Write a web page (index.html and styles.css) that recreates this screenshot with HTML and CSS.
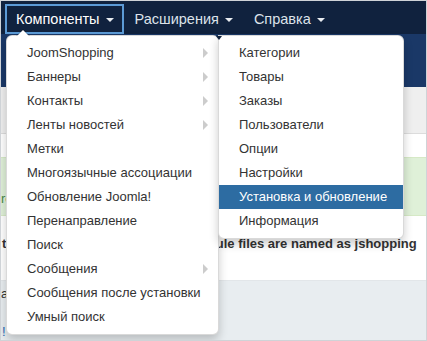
FILE: index.html
```html
<!doctype html>
<html lang="ru">
<head>
    <meta charset="UTF-8">
    <title>Компоненты</title>
    <link rel="stylesheet" href="styles.css">
</head>
<body>
<div class="frame">
    <div class="navbar">
        <div class="nav-item active">Компоненты <b class="caret"></b></div>
        <div class="nav-item">Расширения <b class="caret"></b></div>
        <div class="nav-item">Справка <b class="caret"></b></div>
    </div>
    <div class="header"></div>
    <div class="subhead"></div>
    <div class="content">
        <div class="alert">ro</div>
        <p class="note">that all of the template and all module files are named as jshopping</p>
    </div>
    <div class="footer">
        <p class="footer-line">a</p>
        <p class="footer-link">!</p>
    </div>

    <ul class="dropdown-menu">
        <li class="dropdown-submenu">
            <a>JoomShopping</a>
            <ul class="dropdown-menu submenu">
                <li><a>Категории</a></li>
                <li><a>Товары</a></li>
                <li><a>Заказы</a></li>
                <li><a>Пользователи</a></li>
                <li><a>Опции</a></li>
                <li><a>Настройки</a></li>
                <li class="hover"><a>Установка и обновление</a></li>
                <li><a>Информация</a></li>
            </ul>
        </li>
        <li class="dropdown-submenu"><a>Баннеры</a></li>
        <li class="dropdown-submenu"><a>Контакты</a></li>
        <li class="dropdown-submenu"><a>Ленты новостей</a></li>
        <li><a>Метки</a></li>
        <li><a>Многоязычные ассоциации</a></li>
        <li><a>Обновление Joomla!</a></li>
        <li><a>Перенаправление</a></li>
        <li><a>Поиск</a></li>
        <li class="dropdown-submenu"><a>Сообщения</a></li>
        <li><a>Сообщения после установки</a></li>
        <li><a>Умный поиск</a></li>
    </ul>
</div>
</body>
</html>
```

FILE: styles.css
```css
body{
    margin:0;
    background-color:#fff;
    font-family:"Liberation Sans", Arial, sans-serif;
    font-size:13px;
    color:#333;
}

.frame{
    position:relative;
    width:425px;
    height:339px;
    border:1px solid #cfd3d7;
    overflow:hidden;
    display:flex;
    flex-direction:column;
}

/* top bar */
.navbar{
    height:33px;
    flex:none;
    box-sizing:border-box;
    padding:3px 0 0 4px;
    background-color:#10223e;
    display:flex;
}
.nav-item{
    display:flex;
    align-items:center;
    height:30px;
    box-sizing:border-box;
    padding:0 8px 0 9px;
    border:2px solid transparent;
    font-size:14.5px;
    color:#dde3ea;
}
.nav-item.active{
    border-color:#5c9bd6;
    color:#fff;
}
.caret{
    margin-left:6px;
    margin-top:1px;
    border-top:4px solid #e8ecf0;
    border-left:4px solid transparent;
    border-right:4px solid transparent;
}

.header{
    height:53px;
    flex:none;
    background-color:#1a3867;
}
.subhead{
    height:46px;
    flex:none;
    background-color:#efefef;
    border-bottom:1px solid #dcdcdc;
}

.content{
    height:146px;
    flex:none;
    padding-top:23px;
    box-sizing:border-box;
    background-color:#fff;
}
.alert{
    height:59px;
    box-sizing:border-box;
    padding-top:34px;
    background-color:#dff0d8;
    border-top:1px solid #d6e9c6;
    border-bottom:1px solid #d6e9c6;
    color:#468847;
    line-height:14px;
}
.note{
    margin:21px 0 0 1px;
    font-weight:bold;
    white-space:nowrap;
    line-height:14px;
}

.footer{
    flex:1;
    background-color:#e8edf0;
    border-top:1px solid #e2e6e9;
    padding-top:5px;
}
.footer p{
    margin:0;
    line-height:16px;
}
.footer-link{
    margin-top:22px !important;
    padding-left:1px;
    color:#2a69b8;
}

/* menus */
.dropdown-menu{
    position:absolute;
    top:34px;
    left:5px;
    width:211px;
    margin:0;
    padding:5px 0;
    list-style:none;
    background-color:#fff;
    border:1px solid rgba(0,0,0,.15);
    border-radius:6px;
    box-shadow:0 5px 10px rgba(0,0,0,.2);
}
.dropdown-menu:before{
    content:'';
    position:absolute;
    top:-7px;
    left:9px;
    border-left:7px solid transparent;
    border-right:7px solid transparent;
    border-bottom:7px solid rgba(0,0,0,.2);
}
.dropdown-menu:after{
    content:'';
    position:absolute;
    top:-6px;
    left:10px;
    border-left:6px solid transparent;
    border-right:6px solid transparent;
    border-bottom:6px solid #fff;
}
.dropdown-menu li{
    position:relative;
}
.dropdown-menu a{
    display:block;
    padding:3px 20px;
    line-height:18px;
    color:#333;
    white-space:nowrap;
}
.dropdown-submenu > a:after{
    content:'';
    float:right;
    margin:4px -10px 0 0;
    border-top:5px solid transparent;
    border-bottom:5px solid transparent;
    border-left:5px solid #ccc;
}

.submenu{
    top:-6px;
    left:100%;
    width:184px;
    border-radius:0 6px 6px 6px;
}
.submenu:after{
    display:none;
}
.submenu:before{
    top:0;
    left:-3px;
    border-left:3px solid transparent;
    border-right:3px solid transparent;
    border-bottom:0;
    border-top:4px solid #10223e;
}
.submenu .hover a{
    background-color:#2d6ca2;
    color:#fff;
}
```
